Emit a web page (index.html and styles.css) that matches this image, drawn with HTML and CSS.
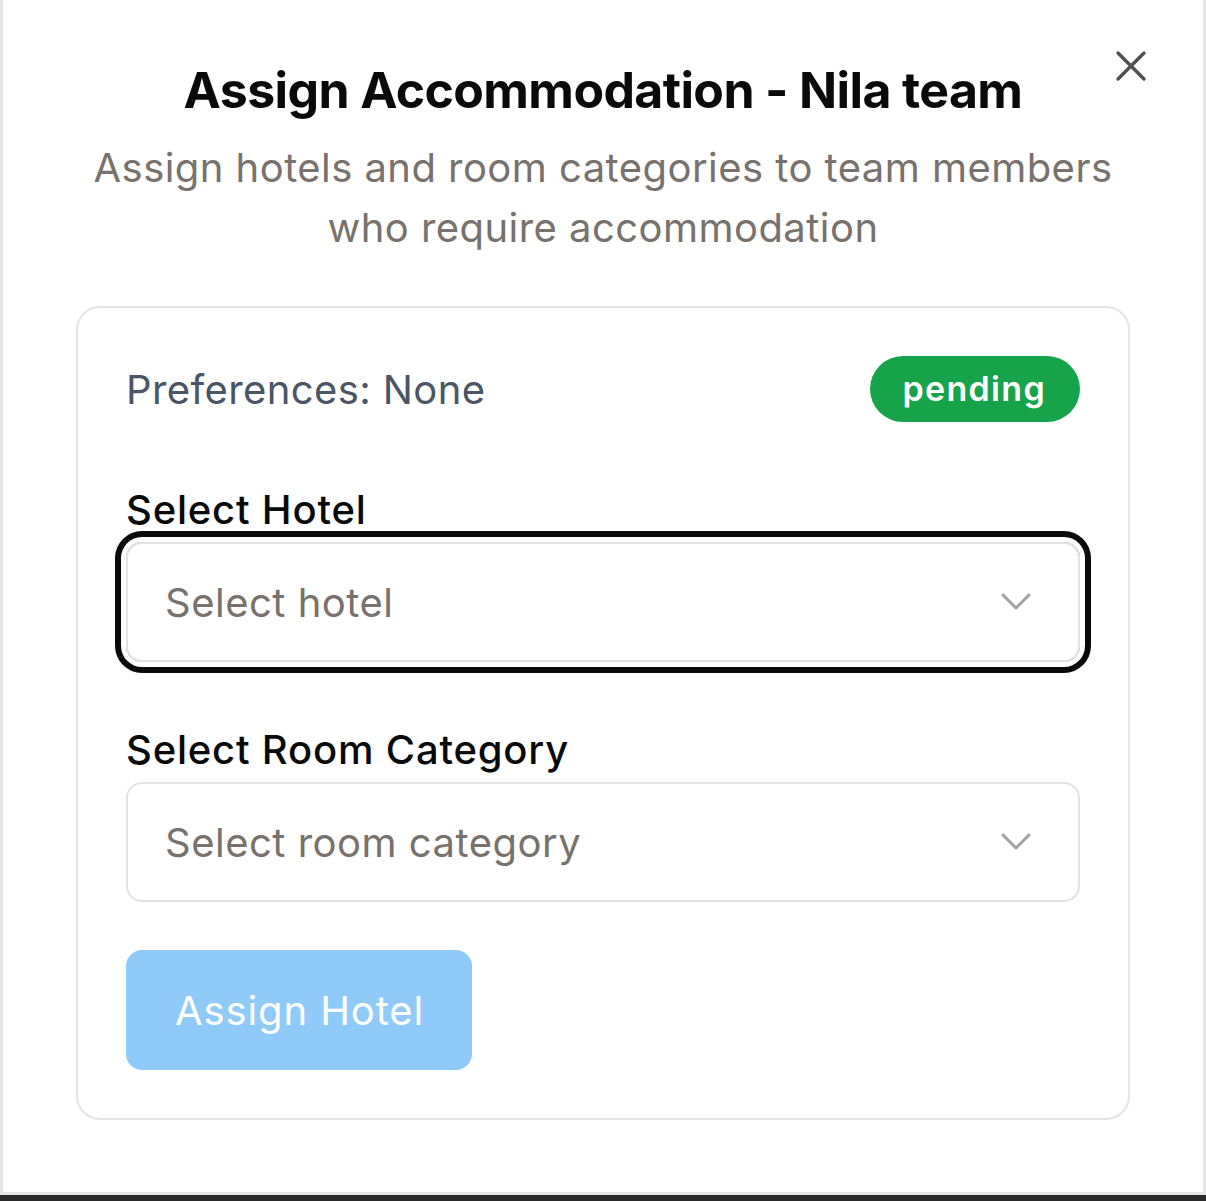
FILE: index.html
```html
<!DOCTYPE html>
<html lang="en">
<head>
<meta charset="utf-8">
<title>Assign Accommodation</title>
<link rel="stylesheet" href="styles.css">
</head>
<body>
<div class="dialog">
  <button class="close" aria-label="Close">
    <svg width="32" height="32" viewBox="0 0 32 32"><path d="M3 3 L29 29 M29 3 L3 29" stroke="#505050" stroke-width="3.4" stroke-linecap="round" fill="none"/></svg>
  </button>
  <header class="head">
    <h1 class="title">Assign Accommodation - Nila team</h1>
    <p class="subtitle">Assign hotels and room categories to team members<br>who require accommodation</p>
  </header>
  <section class="card">
    <div class="pref-row">
      <span class="pref">Preferences: None</span>
      <span class="badge">pending</span>
    </div>
    <div class="field">
      <label class="label">Select Hotel</label>
      <div class="select focused">
        <span class="placeholder">Select hotel</span>
        <svg class="chev" width="32" height="20" viewBox="0 0 32 20"><path d="M3 3 L16 16 L29 3" stroke="#a3a3a3" stroke-width="3" fill="none" stroke-linecap="round" stroke-linejoin="round"/></svg>
      </div>
    </div>
    <div class="field">
      <label class="label">Select Room Category</label>
      <div class="select">
        <span class="placeholder">Select room category</span>
        <svg class="chev" width="32" height="20" viewBox="0 0 32 20"><path d="M3 3 L16 16 L29 3" stroke="#a3a3a3" stroke-width="3" fill="none" stroke-linecap="round" stroke-linejoin="round"/></svg>
      </div>
    </div>
    <div class="actions">
      <button class="btn">Assign Hotel</button>
    </div>
  </section>
</div>
<div class="bottom-bar"></div>
</body>
</html>
```
FILE: styles.css
```css
* { box-sizing: border-box; }
html, body { margin: 0; padding: 0; }
body {
  background: #e6e6e6;
  font-family: Inter, "Noto Sans", sans-serif;
  width: 1206px;
  height: 1201px;
  overflow: hidden;
}
.dialog {
  position: relative;
  width: 1200px;
  height: 1192px;
  margin: 0 3px;
  background: #fff;
  padding: 60px 73px 0;
}
.close {
  position: absolute;
  top: 50px;
  right: 56px;
  padding: 0;
  border: 0;
  background: none;
  width: 32px;
  height: 32px;
}
.close svg { display: block; }
.head { text-align: center; }
.title {
  margin: 0;
  font-size: 50px;
  line-height: 60px;
  font-weight: 700;
  letter-spacing: -0.62px;
  color: #0a0a0a;
}
.subtitle {
  margin: 18px 0 0;
  font-size: 40px;
  line-height: 60px;
  color: #78716c;
  letter-spacing: 0.45px;
}
.card {
  margin-top: 48px;
  border: 2px solid #e5e5e5;
  border-radius: 24px;
  padding: 48px 48px;
  display: flex;
  flex-direction: column;
}
.pref-row {
  display: flex;
  justify-content: space-between;
  align-items: center;
  height: 66px;
}
.pref {
  font-size: 40px;
  color: #4a5565;
  letter-spacing: 0.4px;
}
.badge {
  background: #16a34a;
  color: #fff;
  font-size: 34px;
  font-weight: 600;
  height: 66px;
  line-height: 66px;
  padding: 0 34px 0 33px;
  border-radius: 33px;
  letter-spacing: 1.3px;
}
.field {
  margin-top: 64px;
  display: flex;
  flex-direction: column;
  gap: 8px;
}
.label {
  font-size: 40px;
  line-height: 48px;
  font-weight: 500;
  color: #0a0a0a;
  letter-spacing: 0.8px;
}
.select {
  height: 120px;
  border: 2px solid #e3e3e3;
  border-radius: 16px;
  display: flex;
  align-items: center;
  justify-content: space-between;
  padding: 0 46px 0 37px;
}
.select.focused {
  box-shadow: 0 0 0 5px #fff, 0 0 0 11px #0a0a0a;
}
.placeholder {
  font-size: 40px;
  color: #78716c;
  letter-spacing: 0.5px;
}
.chev { display: block; }
.actions { margin-top: 48px; display: flex; }
.btn {
  height: 120px;
  padding: 0 48px 0 49px;
  border: 0;
  border-radius: 16px;
  background: #90caf9;
  color: #fff;
  font-family: inherit;
  font-size: 40px;
  letter-spacing: 0.9px;
}
.bottom-bar {
  margin-top: 3px;
  height: 6px;
  background: #2a2a2a;
}
```
